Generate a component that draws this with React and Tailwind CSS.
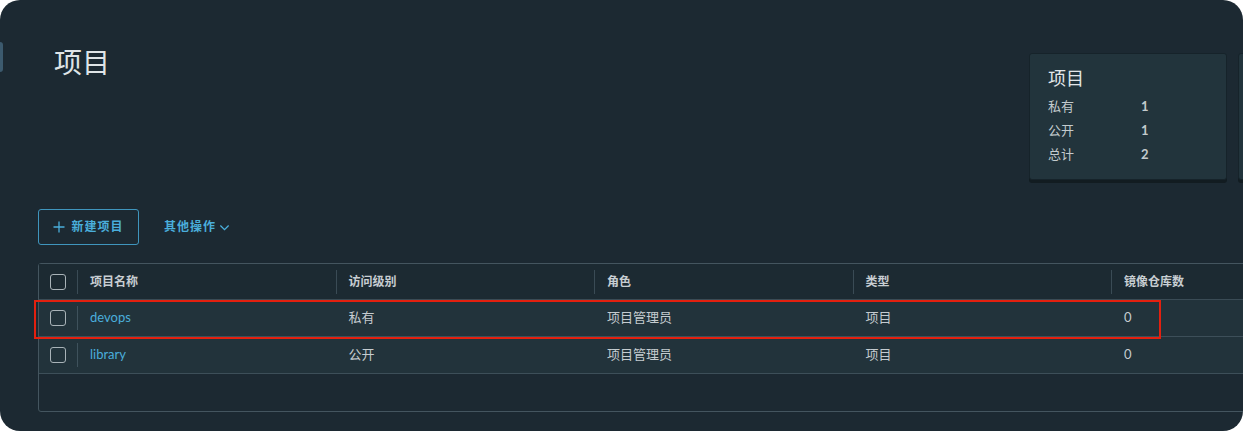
import React from 'react'

const font = { fontFamily: 'Lato, "Noto Sans CJK SC", sans-serif' }

const columns = ['项目名称', '访问级别', '角色', '类型', '镜像仓库数']

const rows = [
    { name: 'devops', access: '私有', role: '项目管理员', type: '项目', repos: '0', highlight: true },
    { name: 'library', access: '公开', role: '项目管理员', type: '项目', repos: '0' },
]

const Checkbox = () => (
    <div className='w-[16px] h-[16px] rounded-[3px] border border-[#a9b3b8]'></div>
)

const StatCard = ({ children }) => (
    <div className='shrink-0 w-[198px] h-[127px] rounded-[3px] bg-[#22343c] border border-[#16232a] shadow-[0_3px_0_#121c21] px-[18px] pt-[11px]'>
        {children}
    </div>
)

export default function App() {
    return (
        <div className='w-[1243px] h-[431px] bg-white' style={font}>
            <div className='relative w-full h-full rounded-[20px] bg-[#1c2932] overflow-hidden'>
                {/* left edge tab */}
                <div className='absolute left-0 top-[42px] w-[3px] h-[30px] rounded-r bg-[#3c5a6e]'></div>

                <div className='flex pl-[54px] pt-[44px]'>
                    <h1 className='shrink-0 w-[975px] text-[28px] leading-[36px] text-[#dfe4e7]'>项目</h1>
                    <div className='shrink-0 flex gap-[11px] mt-[9px]'>
                        <StatCard>
                            <div className='text-[18px] text-[#e3e7ea] leading-[26px]'>项目</div>
                            <div className='mt-[4px] flex flex-col text-[13px] text-[#c3cacd]'>
                                {[['私有', '1'], ['公开', '1'], ['总计', '2']].map(([k, v]) => (
                                    <div key={k} className='flex h-[24px] items-center'>
                                        <span className='w-[93px]'>{k}</span>
                                        <span className='font-bold'>{v}</span>
                                    </div>
                                ))}
                            </div>
                        </StatCard>
                        {/* next card, only its edge is visible */}
                        <StatCard />
                    </div>
                </div>

                <div className='pl-[38px] mt-[29px] flex items-center gap-[25px]'>
                    <button className='h-[36px] w-[101px] rounded-[3px] border border-[#3f95bd] flex items-center justify-center gap-[6px] text-[12px] font-bold text-[#4aaedb] tracking-[1px]'>
                        <svg width='12' height='12' viewBox='0 0 12 12' fill='none' stroke='#4aaedb' strokeWidth='1.3'>
                            <path d='M6 0.5v11M0.5 6h11' />
                        </svg>
                        新建项目
                    </button>
                    <button className='flex items-center gap-[3px] text-[12px] font-bold text-[#4aaedb] tracking-[1px]'>
                        其他操作
                        <svg width='11' height='11' viewBox='0 0 12 12' fill='none' stroke='#4aaedb' strokeWidth='1.4'>
                            <path d='M1.5 3.8L6 8.3l4.5-4.5' />
                        </svg>
                    </button>
                </div>

                <div className='relative ml-[38px] mt-[18px] w-[1340px] rounded-[3px] border border-[#44555f] text-[12px]'>
                    <div className='flex h-[36px] items-center bg-[#1c2a32] text-[#c8ced2] font-bold border-b border-[#3a4b55]'>
                        <div className='shrink-0 w-[38px] flex justify-center'><Checkbox /></div>
                        {columns.map(c => (
                            <div key={c} className='shrink-0 w-[258.5px] h-[24px] flex items-center border-l border-[#3a4b55] pl-[12px]'>{c}</div>
                        ))}
                    </div>
                    {rows.map(r => (
                        <div key={r.name} className='flex h-[37px] items-center bg-[#22333b] border-b border-[#3d4f59] text-[13px] text-[#c5ccd0]'>
                            <div className='shrink-0 w-[38px] flex justify-center'><Checkbox /></div>
                            <div className='shrink-0 w-[258.5px] h-[24px] flex items-center border-l border-[#3f525c] pl-[12px] text-[#4aaedb]'>{r.name}</div>
                            <div className='shrink-0 w-[258.5px] pl-[13px]'>{r.access}</div>
                            <div className='shrink-0 w-[258.5px] pl-[13px]'>{r.role}</div>
                            <div className='shrink-0 w-[258.5px] pl-[13px]'>{r.type}</div>
                            <div className='shrink-0 w-[258.5px] pl-[13px]'>{r.repos}</div>
                        </div>
                    ))}
                    <div className='h-[37px]'></div>
                    {/* highlight frame */}
                    <div className='absolute left-[-5px] top-[36px] w-[1127px] h-[39px] border-2 border-[#e3200f]'></div>
                </div>
            </div>
        </div>
    )
}
